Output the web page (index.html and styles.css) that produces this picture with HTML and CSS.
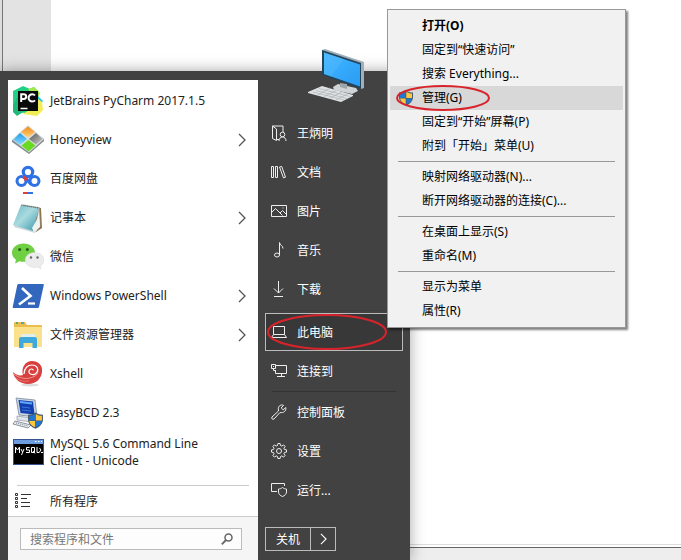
FILE: index.html
```html
<!DOCTYPE html>
<html lang="zh-CN">
<head>
  <meta charset="UTF-8">
  <meta name="viewport" content="width=device-width, initial-scale=1.0">
  <title>开始菜单</title>
  <link rel="stylesheet" href="styles.css">
</head>
<body>
  <!-- shared symbols -->
  <svg class="defs" width="0" height="0" aria-hidden="true">
    <symbol id="chevron" viewBox="0 0 8 14"><path d="M1 1l6 6-6 6" fill="none" stroke="currentColor" stroke-width="1.3"/></symbol>
    <symbol id="shield" viewBox="0 0 16 16">
      <path d="M8 0.5C6 2 3.500 2.500 1 2.500V7c0 4 3 7 7 8.700C12 14 15 11 15 7V2.500C12.500 2.500 10 2 8 .5z" fill="#46586c"/>
      <path d="M7.700 1.800C6 3 4 3.500 2 3.600V8h5.700z" fill="#1f77d0"/>
      <path d="M8.300 1.800C10 3 12 3.500 14 3.600V8H8.300z" fill="#ffc83a"/>
      <path d="M2.100 8.400h5.600v6C4.500 13 2.400 11 2.100 8.400z" fill="#ffc83a"/>
      <path d="M13.900 8.400H8.300v6c3.200-1.400 5.300-3.400 5.600-6z" fill="#1f77d0"/>
    </symbol>
  </svg>

  <div class="desktop">
    <div class="side-pane"></div>
    <div class="status-bar"></div>

    <div class="start-menu">
      <div class="programs">
        <ul class="program-list">
          <li><button class="program">
            <svg class="app-icon" viewBox="0 0 32 32">
              <path d="M1 6l10-5 7 3 4-2 5 5-4 20-10 1-8-1-4-4z" fill="#22d088"/>
              <path d="M1 20l5-9 8 14-9 6-4-4z" fill="#1fb978"/>
              <path d="M16 4l6-2 6 6-3 8z" fill="#a4e84a"/>
              <path d="M25 10l6 6-4 6z" fill="#21c7e8"/>
              <path d="M26 14l4 3 1 8-6 6-14-2 9-6z" fill="#f2ed54"/>
              <rect x="6" y="6" width="20" height="20" fill="#0a0a0a"/>
              <path d="M8.500 23.500h7" stroke="#fff" stroke-width="1.500"/>
              <path d="M9.200 17V9.200h2.600a2.400 2.400 0 0 1 0 4.800H9.200M23 10.400a3.700 3.700 0 1 0 0 5" fill="none" stroke="#fff" stroke-width="2"/>
            </svg>
            <span class="name">JetBrains PyCharm 2017.1.5</span>
          </button></li>
          <li><button class="program">
            <svg class="app-icon" viewBox="0 0 32 32">
              <defs>
                <linearGradient id="hvO" x2="0" y2="1"><stop offset="0" stop-color="#f08b1a"/><stop offset="1" stop-color="#ffd27a"/></linearGradient>
                <linearGradient id="hvB" x2="0" y2="1"><stop offset="0" stop-color="#1b9ce8"/><stop offset="1" stop-color="#8bdcff"/></linearGradient>
                <linearGradient id="hvK" x2="1" y2="1"><stop offset="0" stop-color="#555"/><stop offset="1" stop-color="#ccc"/></linearGradient>
              </defs>
              <path d="M16 3L0 16v2l17 12 15-13v-2z" fill="#858b8e"/>
              <path d="M16 1L0 15.500 17 28.500 32 15z" fill="#d9dddc"/>
              <path d="M16 2.500l7 5.500-7 5.500L9 8z" fill="url(#hvO)"/>
              <path d="M8 9l7 6-7 6-6.500-5.500z" fill="url(#hvB)"/>
              <path d="M24 9l6.500 6-6.500 5.500-7-5.500z" fill="url(#hvK)"/>
              <path d="M16.500 16l7 5.500-7 6-7-6z" fill="#66db22"/>
            </svg>
            <span class="name">Honeyview</span>
            <svg class="chevron"><use href="#chevron"/></svg>
          </button></li>
          <li><button class="program">
            <svg class="app-icon" viewBox="0 0 32 32" fill="none">
              <circle cx="9.500" cy="18" r="4.500" stroke="#2f72e6" stroke-width="3"/>
              <circle cx="22.500" cy="18" r="4.500" stroke="#2f72e6" stroke-width="3"/>
              <circle cx="16" cy="9" r="4.700" stroke="#2f72e6" stroke-width="3.200"/>
              <path d="M12.500 14.500c3 1 4 5 7 7" stroke="#2f72e6" stroke-width="3.200"/>
              <path d="M11 14c1.800.4 2.800 1.600 3 3.500" stroke="#e23c3c" stroke-width="3"/>
              <path d="M11 30h5" stroke="#e23c3c" stroke-width="2"/>
              <path d="M16 30h5" stroke="#2f72e6" stroke-width="2"/>
            </svg>
            <span class="name">百度网盘</span>
          </button></li>
          <li><button class="program">
            <svg class="app-icon" viewBox="0 0 32 32">
              <defs><linearGradient id="np" x2="1" y2="1"><stop offset="0" stop-color="#6fb9c6"/><stop offset=".45" stop-color="#a9dae0"/><stop offset="1" stop-color="#3795a8"/></linearGradient></defs>
              <path d="M11 3l18 3 1 20-6 4z" fill="#8a7550"/>
              <path d="M27 6l1 18-5 6z" fill="#fff" stroke="#b8b8a8" stroke-width=".6"/>
              <path d="M2 25l21 6 2-3-22-6z" fill="#cdd8d8"/>
              <path d="M9 3l18 3-6 23L1 23z" fill="url(#np)"/>
              <path d="M20 26l7-12 1 11-6 5z" fill="#eef2f2"/>
              <path d="M9.500 3l18 3" stroke="#5c5c5c" stroke-width="1.600" stroke-dasharray="1 1"/>
            </svg>
            <span class="name">记事本</span>
            <svg class="chevron"><use href="#chevron"/></svg>
          </button></li>
          <li><button class="program">
            <svg class="app-icon" viewBox="0 0 32 32">
              <path d="M11.500 2.500C5 2.500 0 6.500 0 11.700c0 3 1.600 5.400 4 7L3 22.500l4.500-2.300c1.300.4 2.600.6 4 .6 6.500 0 11.500-4 11.500-9.100s-5-9.200-11.500-9.200z" fill="#6fd044"/>
              <circle cx="7.700" cy="8.500" r="1.500" fill="#275b16"/><circle cx="15.300" cy="8.500" r="1.500" fill="#275b16"/>
              <path d="M22.500 11.500c-5 0-9.300 3.200-9.300 7.500s4.300 7.500 9.300 7.500c1 0 2.200-.2 3.200-.5l3.300 2-.7-3c2-1.400 3.700-3.500 3.700-6 0-4.300-4.500-7.500-9.500-7.500z" fill="#ececec" stroke="#d8d8d8" stroke-width=".5"/>
              <circle cx="19" cy="16.500" r="1.200" fill="#666"/><circle cx="25.500" cy="16.500" r="1.200" fill="#666"/>
            </svg>
            <span class="name">微信</span>
          </button></li>
          <li><button class="program">
            <svg class="app-icon" viewBox="0 0 32 32">
              <path d="M6.500 4H31q1 0 .8 1L27 27q-.3 1-1.300 1H1.500q-1 0-.8-1L5.300 5q.2-1 1.200-1z" fill="#3267bd"/>
              <path d="M10 8l8.500 8-11.500 8.500" fill="none" stroke="#fff" stroke-width="2.600"/>
              <path d="M16 23.500h7" stroke="#fff" stroke-width="2.200"/>
            </svg>
            <span class="name">Windows PowerShell</span>
            <svg class="chevron"><use href="#chevron"/></svg>
          </button></li>
          <li><button class="program">
            <svg class="app-icon" viewBox="0 0 32 32">
              <path d="M2 4q0-1 1-1h10l2 3h14q1 0 1 1v21H2z" fill="#e9bd4e"/>
              <path d="M4 4h2" stroke="#36a35a" stroke-width="1.500"/><path d="M9 4h3" stroke="#3595d8" stroke-width="1.500"/>
              <path d="M2 8h28v20H2z" fill="#fbe18c"/>
              <path d="M9 15h14v6H9z" fill="#dff0ea"/>
              <path d="M7 29V20q0-2 2-2h14q2 0 2 2v9h-4.500v-5h-9v5z" fill="#3fa9dc"/>
            </svg>
            <span class="name">文件资源管理器</span>
            <svg class="chevron"><use href="#chevron"/></svg>
          </button></li>
          <li><button class="program">
            <svg class="app-icon" viewBox="0 0 32 32">
              <ellipse cx="18" cy="27" rx="9" ry="1.500" fill="#ddd"/>
              <path d="M1 14c3 3 7 4 10 3C9 10 13 3 20 3c6 0 11 4 10 11-.8 7-6 12-14 12C8 26 2 21 1 14z" fill="#d8403f"/>
              <path d="M2 16c5 4 12 6 19 3 3-1 5-3 5-6" fill="none" stroke="#f0948c" stroke-width="1"/>
              <path d="M12 16c0-6 4-9 8-9 5 0 7 4 5 7-2 4-9 3-8-1 .6-2.500 4-2.600 4.300-.6" fill="none" stroke="#fff" stroke-width="1.200"/>
              <path d="M3 19c3 3 8 5 14 4" fill="none" stroke="#e87770" stroke-width="1"/>
            </svg>
            <span class="name">Xshell</span>
          </button></li>
          <li><button class="program">
            <svg class="app-icon" viewBox="0 0 32 32">
              <path d="M4 1l19 2 2 17-18-2z" fill="#c8d4e2" stroke="#6c7d92" stroke-width=".7"/>
              <path d="M6.500 3l14.500 1.500 1.500 13-14-1.500z" fill="#123fae"/>
              <path d="M8 5l12 1.500" stroke="#5fa7ff" stroke-width="2"/>
              <path d="M10 10l8 1M10 13l9 1" stroke="#3b77dd"/>
              <path d="M5 19l15 2v4L5 23z" fill="#dfe5ec" stroke="#7d8896" stroke-width=".6"/>
              <path d="M3 24l16 4-3 3-15-4z" fill="#e8ebf0" stroke="#606978" stroke-width=".7"/>
              <path d="M4 26l12 3" stroke="#7e8794" stroke-dasharray="1 1"/>
              <use href="#shield" x="15" y="15" width="17" height="17"/>
            </svg>
            <span class="name">EasyBCD 2.3</span>
          </button></li>
          <li><button class="program">
            <svg class="app-icon" viewBox="0 0 32 32">
              <rect x="1.500" y="3.500" width="30" height="25" fill="#000" stroke="#36558f"/>
              <path d="M2 6h29" stroke="#6d9be0" stroke-width="4"/>
              <path d="M23 5.500h1.500M26 5.500h1.500M29 5.500h1" stroke="#fff"/>
              <path d="M3.500 17v-6l2 3 2-3v6M9 13l1.500 3M12 13l-2.500 6M17.500 11.500h-3v2.500h3v2.500h-3.500M19.500 11.500h3v5h-3zM21 15l2 2.500M25 11v5.500h2.500M27.500 12l1.500 2-1.500 2M29 16.500h2" fill="none" stroke="#fff"/>
            </svg>
            <span class="name">MySQL 5.6 Command Line Client - Unicode</span>
          </button></li>
        </ul>
        <hr>
        <button class="all-programs">
          <svg class="list-icon" viewBox="0 0 16 16" fill="none" stroke="#333">
            <path d="M.5 .5h2v2h-2zM.5 4.500h2v2h-2zM.5 8.500h2v2h-2zM.5 12.500h2v2h-2zM6 1.500h10M6 5.500h6M6 9.500h9M6 13.500h9"/>
          </svg>
          <span>所有程序</span>
        </button>
        <div class="search">
          <label class="search-box">
            <input type="text" placeholder="搜索程序和文件" aria-label="搜索程序和文件">
            <svg class="search-icon" viewBox="0 0 12 12" fill="none" stroke="#666"><circle cx="7.500" cy="4.500" r="3.500" stroke-width="1.500"/><path d="M5 7L.8 11.300" stroke-width="1.800"/></svg>
          </label>
        </div>
      </div>

      <div class="places">
        <svg class="computer" viewBox="0 0 58 54">
          <defs><linearGradient id="scr" x2="1" y2="1"><stop offset="0" stop-color="#45b7ff"/><stop offset=".5" stop-color="#35a9fb"/><stop offset="1" stop-color="#2b9cf2"/></linearGradient></defs>
          <path d="M26 38l5-3 18 4 2 3-6 3-18-4z" fill="#cfd4d6"/>
          <path d="M33 34l7 1v5l-7-2z" fill="#9fa6a9"/>
          <path d="M15 1l3-1 39 13v26l-3 1z" fill="#9eb0ba"/>
          <path d="M15 1l39 13v26L15 26z" fill="#24445b"/>
          <path d="M17 3.500l36 12v22L17 25z" fill="url(#scr)"/>
          <path d="M17 3.500l20 6.500L24 27.500 17 25z" fill="#66c5ff" opacity=".25"/>
          <path d="M1 43l14-6 31 9v1l-12 6-33-9z" fill="#dfe2e3"/>
          <path d="M6 43l31 8M9 41.500l31 8M12 39.500l31 8M11 46l12-7M17 47.500l12-6M23 49l12-6M29 51l11-6" stroke="#aab0b3" stroke-width=".7"/>
        </svg>
        <ul class="place-list">
          <li><button class="place">
            <svg class="icon" viewBox="0 0 16 16"><path d="M8 14.500H6M1.500 1v12.500l4 2V4L1.500 1H12v6"/><circle cx="11.500" cy="9.500" r="2.300"/><path d="M8 16c0-2.500 1.500-4 3.500-4s3.500 1.500 3.500 4"/></svg>
            <span>王炳明</span>
          </button></li>
          <li><button class="place">
            <svg class="icon" viewBox="0 0 16 16"><path d="M.5 2.500h2v11h-2zM4.500 2.500h2v11h-2zM8.500 3l2.200-.6 3.800 10.800-2 .7z"/></svg>
            <span>文档</span>
          </button></li>
          <li><button class="place">
            <svg class="icon" viewBox="0 0 16 16"><path d="M.5 2.500h15v11H.5zM.5 9.500l4-4 7 7M9 10l2.500-2.500 4 4"/><path d="M11.500 5h1"/></svg>
            <span>图片</span>
          </button></li>
          <li><button class="place">
            <svg class="icon" viewBox="0 0 16 16"><path d="M8.500 13V.5c0 2.500 3.500 3 3.500 6"/><ellipse cx="6" cy="13" rx="2.500" ry="2"/></svg>
            <span>音乐</span>
          </button></li>
          <li><button class="place">
            <svg class="icon" viewBox="0 0 16 16"><path d="M7.500 0v12M3 7.500l4.500 4.500L12 7.500M3 15.500h9"/></svg>
            <span>下载</span>
          </button></li>
          <li class="divider spaced"></li>
          <li><button class="place active">
            <svg class="icon" viewBox="0 0 16 16"><path d="M2.500 2.500h11v8h-11zM2.500 10.500l-2 3h15l-2-3"/></svg>
            <span>此电脑</span>
            <svg class="mark mark-place" viewBox="0 0 120 36"><ellipse cx="60" cy="18" rx="59" ry="17"/></svg>
          </button></li>
          <li><button class="place">
            <svg class="icon" viewBox="0 0 16 16"><path d="M5 2.500h10.500v8h-11V7M.5 1.500h4v4h-4zM2.500 5.500v2h2M2 3.500h1M10.500 10.500v3M6 13.500h8"/></svg>
            <span>连接到</span>
          </button></li>
          <li class="divider"></li>
          <li><button class="place">
            <svg class="icon" viewBox="0 0 16 16"><path d="M14.800 3.500l-2.600 2.300-2-1.800 2.300-2.700C10 .2 7.300 2 7.300 4.700L7.500 7 1 13c-1 1.500.8 3 2 2l6-6.500c3.500.8 6.500-1.500 5.800-5z"/></svg>
            <span>控制面板</span>
          </button></li>
          <li><button class="place">
            <svg class="icon" viewBox="0 0 16 16"><circle cx="8" cy="8" r="2.500"/><path d="M6.900.5h2.200l.4 2 1.300.6 1.800-1.200 1.500 1.500-1.200 1.800.6 1.300 2 .4v2.200l-2 .4-.6 1.300 1.200 1.800-1.500 1.500-1.800-1.200-1.300.6-.4 2H6.900l-.4-2-1.300-.6-1.800 1.200-1.500-1.500 1.200-1.800-.6-1.300-2-.4V6.900l2-.4.6-1.300-1.200-1.800 1.500-1.500 1.800 1.200 1.300-.6z"/></svg>
            <span>设置</span>
          </button></li>
          <li><button class="place">
            <svg class="icon" viewBox="0 0 16 16"><path d="M6 9.500H.5v-8h13V4M11.500 5.500c-1.200 1-2.500 1.400-4 1.500v3c0 2 1.700 3.700 4 4.500 2.300-.8 4-2.500 4-4.500V7c-1.500-.1-2.800-.5-4-1.500z"/></svg>
            <span>运行...</span>
          </button></li>
        </ul>
        <div class="power">
          <button class="shutdown">关机</button>
          <button class="power-more" aria-label="更多电源选项"><svg class="chevron"><use href="#chevron"/></svg></button>
        </div>
      </div>
    </div>

    <div class="context-menu">
      <button class="default">打开(O)</button>
      <button>固定到“快速访问”</button>
      <button>搜索 Everything...</button>
      <button class="hover">
        <svg class="shield"><use href="#shield"/></svg>
        管理(G)
        <svg class="mark mark-manage" viewBox="0 0 94 26"><ellipse cx="47" cy="13" rx="46" ry="12"/></svg>
      </button>
      <button>固定到“开始”屏幕(P)</button>
      <button>附到「开始」菜单(U)</button>
      <hr>
      <button>映射网络驱动器(N)...</button>
      <button>断开网络驱动器的连接(C)...</button>
      <hr>
      <button>在桌面上显示(S)</button>
      <button>重命名(M)</button>
      <hr>
      <button>显示为菜单</button>
      <button>属性(R)</button>
    </div>
  </div>
</body>
</html>
```

FILE: styles.css
```css
* {
  box-sizing: border-box;
}
body {
  margin: 0;
  font-family: "Noto Sans", "Noto Sans CJK SC", sans-serif;
  font-size: 12px;
  line-height: 17px;
  color: #222;
}
ul {
  list-style: none;
  margin: 0;
  padding: 0;
}
button {
  font: inherit;
  color: inherit;
  background: none;
  border: none;
  padding: 0;
  text-align: left;
}
hr {
  height: 1px;
  border: none;
}
svg {
  flex: none;
}
.defs {
  position: absolute;
}

/* desktop */
.desktop {
  position: relative;
  min-height: 100vh;
  padding-top: 71px;
  background: #fff;
  overflow: hidden;
}
.side-pane {
  position: absolute;
  left: 0;
  top: 0;
  width: 51px;
  height: 100%;
  background: linear-gradient(90deg, #ddd 2px, #777 2px, #777 3px, #e3e3e3 3px);
}
.status-bar {
  position: absolute;
  left: 51px;
  right: 0;
  bottom: 0;
  height: 14px;
  background: #eee;
  border-top: 1px solid #666;
  box-shadow: 0 -2px 0 #fff, 0 -3px 0 #ddd;
}

/* start menu */
.start-menu {
  position: relative;
  display: flex;
  width: 410px;
  min-height: calc(100vh - 71px);
  padding: 9px 0 0 8px;
  background: #424242;
  box-shadow: 0 0 14px rgba(0, 0, 0, 0.35);
}
.programs {
  display: flex;
  flex-direction: column;
  width: 250px;
  background: #fff;
}
.program-list {
  padding: 1px 0 14px;
}
.program {
  display: flex;
  align-items: center;
  gap: 6px;
  width: 100%;
  height: 39px;
  padding: 0 12px 0 4px;
}
.program .name {
  flex: 1;
  padding-right: 16px;
}
.app-icon {
  width: 32px;
  height: 32px;
}
.chevron {
  width: 8px;
  height: 14px;
  color: #555;
}
.programs hr {
  width: 232px;
  margin: 0 auto;
  background: #ccc;
}
.all-programs {
  display: flex;
  align-items: center;
  gap: 19px;
  height: 30px;
  padding-left: 7px;
}
.list-icon {
  width: 16px;
  height: 16px;
}
.search {
  flex: 1;
  padding: 11px 16px 10px 12px;
  background: #f5f5f5;
  border-top: 1px solid #ccc;
}
.search-box {
  display: flex;
  align-items: center;
  height: 22px;
  padding: 0 8px 0 9px;
  background: #fdfdfd;
  border: 1px solid #bbb;
}
.search-box input {
  flex: 1;
  min-width: 0;
  padding: 0;
  border: none;
  outline: none;
  background: none;
  font: inherit;
  color: #222;
}
.search-box input::placeholder {
  color: #777;
}
.search-icon {
  width: 12px;
  height: 12px;
}

/* right column */
.places {
  position: relative;
  flex: 1;
  padding: 34px 7px 10px;
  color: #fff;
}
.computer {
  position: absolute;
  left: 49px;
  top: -31px;
  width: 58px;
  height: 54px;
}
.place-list {
  display: flex;
  flex-direction: column;
  gap: 1px;
}
.place {
  position: relative;
  display: flex;
  align-items: center;
  gap: 10px;
  width: 100%;
  height: 38px;
  padding-left: 5px;
  border: 1px solid transparent;
}
.place.active {
  background: #383838;
  border-color: #bbb;
}
.icon {
  width: 16px;
  height: 16px;
  fill: none;
  stroke: #eee;
}
.divider {
  height: 1px;
  margin: 0 7px;
  background: #333;
}
.divider.spaced {
  margin: 1px 7px;
  background: #3e3e3e;
}
.power {
  display: flex;
  width: 71px;
  height: 24px;
  margin-top: 18px;
  border: 1px solid #bbb;
}
.shutdown {
  flex: 1;
  text-align: center;
}
.power-more {
  display: flex;
  align-items: center;
  justify-content: center;
  width: 25px;
  border-left: 1px solid #bbb;
}
.power .chevron {
  width: 7px;
  height: 12px;
  color: #fff;
}

/* context menu */
.context-menu {
  position: absolute;
  left: 387px;
  top: 9px;
  width: 239px;
  padding: 4px 2px;
  background: #f1f1f1;
  border: 1px solid #999;
  box-shadow: 2px 2px 2px rgba(0, 0, 0, 0.5);
  color: #000;
}
.context-menu button {
  position: relative;
  display: block;
  width: 100%;
  height: 24px;
  padding: 0 0 2px 32px;
}
.context-menu .default {
  font-weight: bold;
}
.context-menu .hover {
  background: #d8d8d8;
}
.context-menu hr {
  margin: 3px 8px;
  background: #999;
}
.shield {
  position: absolute;
  left: 8px;
  top: 4px;
  width: 16px;
  height: 16px;
}

/* red circles */
.mark {
  position: absolute;
  fill: none;
  stroke: #d9232b;
  stroke-width: 2;
}
.mark-place {
  left: 1px;
  top: 0;
  width: 120px;
  height: 36px;
}
.mark-manage {
  left: 6px;
  top: -1px;
  width: 94px;
  height: 26px;
}
```
